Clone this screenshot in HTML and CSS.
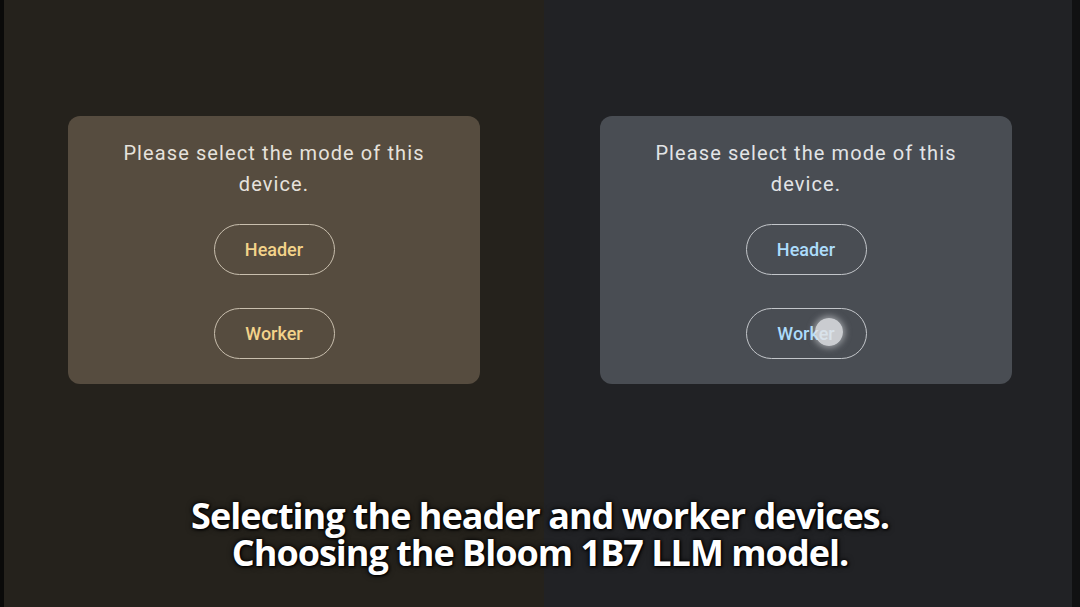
FILE: index.html
```html
<!DOCTYPE html>
<html>
<head>
<meta charset="utf-8">
<link rel="stylesheet" href="styles.css">
</head>
<body>
<div class="screen">
  <div class="strip strip-left"></div>
  <div class="half half-warm">
    <div class="card card-warm">
      <p class="prompt">Please select the mode of this device.</p>
      <div class="buttons">
        <div class="mode-btn btn-warm">Header</div>
        <div class="mode-btn btn-warm">Worker</div>
      </div>
    </div>
  </div>
  <div class="half half-cool">
    <div class="card card-cool">
      <p class="prompt">Please select the mode of this device.</p>
      <div class="buttons">
        <div class="mode-btn btn-cool">Header</div>
        <div class="mode-btn btn-cool">Worker<span class="touch"></span></div>
      </div>
    </div>
  </div>
  <div class="strip strip-right"></div>
  <div class="caption">
    <div class="caption-line">Selecting the header and worker devices.</div>
    <div class="caption-line">Choosing the Bloom 1B7 LLM model.</div>
  </div>
</div>
</body>
</html>
```
FILE: styles.css
```css
html, body {
  margin: 0;
  padding: 0;
  background: #000;
}
.screen {
  position: relative;
  width: 1080px;
  height: 607px;
  display: flex;
  overflow: hidden;
  font-family: Roboto, "Noto Sans", sans-serif;
}
.strip {
  background: #0a0a09;
  height: 100%;
}
.strip-left { width: 4px; }
.strip-right { width: 8px; background: #111112; }
.half {
  height: 100%;
  box-sizing: border-box;
  padding-top: 116px;
}
.half-warm {
  width: 540px;
  background: #25221c;
  padding-left: 64px;
}
.half-cool {
  width: 528px;
  background: #212225;
  padding-left: 56px;
}
.card {
  width: 412px;
  height: 268px;
  box-sizing: border-box;
  border-radius: 12px;
  padding: 22px 40px 0;
  display: flex;
  flex-direction: column;
  align-items: center;
}
.card-warm { background: #564c3f; }
.card-cool { background: #494d53; }
.prompt {
  margin: 0;
  width: 320px;
  text-align: center;
  font-size: 20px;
  line-height: 31px;
  letter-spacing: 1.1px;
  color: #e6e2dc;
  font-weight: 400;
}
.card-cool .prompt { color: #e2e4e6; }
.buttons {
  margin-top: 24px;
  display: flex;
  flex-direction: column;
  gap: 33px;
}
.mode-btn {
  position: relative;
  width: 121px;
  height: 51px;
  box-sizing: border-box;
  border-radius: 26px;
  display: flex;
  align-items: center;
  justify-content: center;
  font-size: 18px;
  font-weight: 500;
}
.btn-warm {
  border: 1.5px solid #c9bfae;
  color: #f3d38a;
}
.btn-cool {
  border: 1.5px solid #c3c6ca;
  color: #acdcfb;
}
.touch {
  position: absolute;
  left: 68px;
  top: 9px;
  width: 28px;
  height: 28px;
  border-radius: 50%;
  background: rgba(225, 227, 230, 0.85);
  box-shadow: 0 0 6px 2px rgba(230, 232, 235, 0.5);
}
.caption {
  position: absolute;
  left: 0;
  right: 0;
  top: 497px;
  text-align: center;
  color: #fff;
  font-family: "Open Sans", Lato, sans-serif;
  font-weight: 700;
  font-size: 36px;
  letter-spacing: -1px;
  text-shadow: 0 0 3px #000, 0 0 6px rgba(0,0,0,0.8), 1px 1px 2px #000;
}
.caption-line {
  height: 37px;
  line-height: 37px;
  white-space: nowrap;
}
```
